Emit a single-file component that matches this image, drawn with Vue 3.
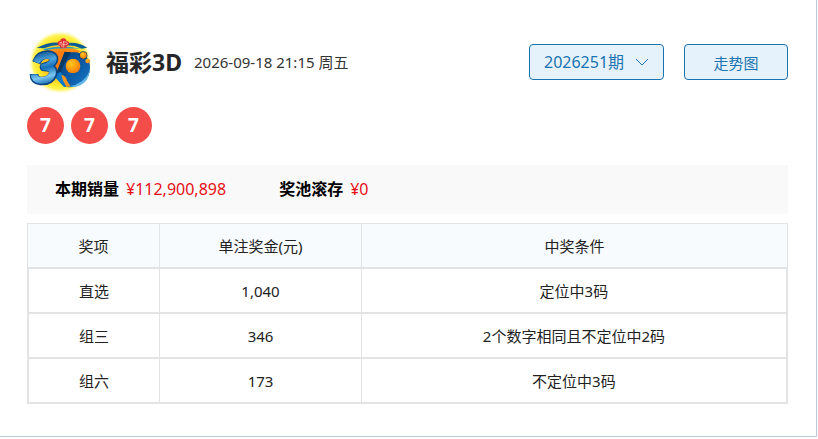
<template>
  <main class="draw-panel">
    <header class="draw-header">
      <svg class="logo" viewBox="21 18 198 186" role="img" aria-label="福彩3D">
        <defs>
          <radialGradient id="sun" cx="50%" cy="50%" r="50%">
            <stop offset="0" stop-color="#ff9a1a" />
            <stop offset="0.45" stop-color="#ffb81e" />
            <stop offset="0.72" stop-color="#ffe92c" />
            <stop offset="0.86" stop-color="#fff455" />
            <stop offset="1" stop-color="#fffbd0" stop-opacity="0" />
          </radialGradient>
          <linearGradient id="three" gradientUnits="userSpaceOnUse" x1="60" y1="78" x2="85" y2="180">
            <stop offset="0" stop-color="#0a4f92" />
            <stop offset="0.3" stop-color="#4fa6dd" />
            <stop offset="0.5" stop-color="#1270ba" />
            <stop offset="0.75" stop-color="#7cc6ee" />
            <stop offset="1" stop-color="#0c62ae" />
          </linearGradient>
          <linearGradient id="dee" x1="0" y1="0" x2="1" y2="1">
            <stop offset="0" stop-color="#043f7c" />
            <stop offset="0.55" stop-color="#0a5ba6" />
            <stop offset="1" stop-color="#1b7ac5" />
          </linearGradient>
          <radialGradient id="orb" cx="38%" cy="34%" r="70%">
            <stop offset="0" stop-color="#ffc81c" />
            <stop offset="0.5" stop-color="#ffa012" />
            <stop offset="1" stop-color="#f4780a" />
          </radialGradient>
        </defs>
        <circle cx="121" cy="112" r="95" fill="url(#sun)" />
        <path d="M76 78 Q130 58 182 78 L166 90 L90 90 Z" fill="#ff8a14" />
        <path d="M50 69 Q86 50 118 53 L120 60 Q96 60 72 70 Z" fill="#0a5d99" />
        <path d="M142 54 Q174 50 202 68 L186 71 Q164 61 140 61 Z" fill="#0a5d99" />
        <path d="M70 72 Q128 56 188 73 Q128 66 74 76 Z" fill="#2a9fbd" />
        <path
          d="M116 82 H166 Q211 87 210 130 Q208 172 166 184 Q148 190 134 184 L112 160 Z"
          fill="url(#dee)"
        />
        <path d="M111 81 L136 76 L112 140 L100 130 Z" fill="#ff7c12" />
        <path d="M134 80 L152 82 L128 126 L122 152 L108 146 Z" fill="#043865" />
        <path d="M100 150 L122 140 L146 184 L132 186 L112 164 Z" fill="#0878c8" />
        <path d="M124 150 Q138 152 141 168 L152 184 L140 186 Q128 170 124 150 Z" fill="#ff941a" />
        <path d="M148 184 Q192 176 208 140 Q205 176 166 186 Z" fill="#64b8e8" />
        <g fill="none" stroke-linejoin="round">
          <path
            d="M49 113 Q58 88 84 89 Q108 91 100 109 Q94 122 72 126 Q105 126 99 148 Q91 169 62 168 Q42 166 42 147"
            stroke="#064483"
            stroke-width="26"
          />
          <path
            d="M49 112 Q58 90 84 91 Q106 93 98 109 Q92 122 72 126 Q102 127 97 147 Q89 167 62 166 Q43 164 42 148"
            stroke="url(#three)"
            stroke-width="20"
          />
        </g>
        <circle cx="159" cy="123" r="22" fill="url(#orb)" />
        <circle cx="190" cy="91" r="12" fill="#083e6e" />
        <circle cx="190" cy="91" r="10" fill="url(#orb)" />
        <circle cx="203" cy="108" r="7" fill="url(#orb)" />
        <g fill="#df3035">
          <circle cx="130" cy="49" r="9" />
          <circle cx="121" cy="55" r="8" />
          <circle cx="139" cy="55" r="8" />
          <circle cx="126" cy="64" r="6" />
          <circle cx="135" cy="63" r="6" />
        </g>
        <g fill="none" stroke="#ffe0d5" stroke-width="2" stroke-linecap="round">
          <path d="M120 59 Q118 51 124 51 Q127 52 126 65" />
          <path d="M131 50 V66 M131 51 Q143 48 142 57 Q139 61 133 59" />
        </g>
      </svg>
      <h1>福彩3D</h1>
      <time datetime="2026-09-18T21:15">2026-09-18 21:15 周五</time>

      <div class="actions">
        <div class="issue-picker">
          <select v-model="issue" aria-label="期号">
            <option v-for="item in issues" :key="item" :value="item">{{ item }}期</option>
          </select>
          <svg class="chevron" viewBox="0 0 14 8" aria-hidden="true">
            <path d="M1 1 L7 7 L13 1" />
          </svg>
        </div>
        <button type="button" class="trend">走势图</button>
      </div>
    </header>

    <ul class="balls">
      <li v-for="(n, i) in numbers" :key="i">{{ n }}</li>
    </ul>

    <dl class="summary">
      <div v-for="item in summary" :key="item.label">
        <dt>{{ item.label }}</dt>
        <dd>{{ item.value }}</dd>
      </div>
    </dl>

    <table>
      <thead>
        <tr>
          <th class="col-prize" scope="col">奖项</th>
          <th class="col-amount" scope="col">单注奖金(元)</th>
          <th scope="col">中奖条件</th>
        </tr>
      </thead>
      <tbody>
        <tr v-for="prize in prizes" :key="prize.name">
          <td>{{ prize.name }}</td>
          <td>{{ prize.amount.toLocaleString('en-US') }}</td>
          <td>{{ prize.condition }}</td>
        </tr>
      </tbody>
    </table>
  </main>
</template>

<script setup>
import { ref } from 'vue';

const issues = ['2026251'];
const issue = ref(issues[0]);

const numbers = [7, 7, 7];

const summary = [
  { label: '本期销量', value: '¥112,900,898' },
  { label: '奖池滚存', value: '¥0' },
];

const prizes = [
  { name: '直选', amount: 1040, condition: '定位中3码' },
  { name: '组三', amount: 346, condition: '2个数字相同且不定位中2码' },
  { name: '组六', amount: 173, condition: '不定位中3码' },
];
</script>

<style>
body {
  background: #fff;
}
</style>

<style scoped>
.draw-panel {
  box-sizing: border-box;
  margin-right: 1px;
  padding: 31px 28px 32px 27px;
  border-right: 1px solid #b9cbdc;
  border-bottom: 1px solid #b9cbdc;
  font-family: "Noto Sans", "Noto Sans CJK SC", sans-serif;
  font-size: 15px;
  line-height: 22px;
  color: #222;
}

.draw-header {
  display: flex;
  align-items: center;
}

.logo {
  flex: none;
  width: 66px;
  height: 62px;
}

h1 {
  margin: 0 12px 0 13px;
  font-size: 23px;
  line-height: 32px;
  font-weight: 700;
  color: #262629;
  white-space: nowrap;
}

time {
  color: #333;
  white-space: nowrap;
}

.actions {
  display: flex;
  gap: 20px;
  margin-left: auto;
}

.issue-picker {
  position: relative;
}

.issue-picker select,
.trend {
  box-sizing: border-box;
  height: 36px;
  margin: 0;
  border: 1px solid #1a74b0;
  border-radius: 4px;
  background: #e6f2fb;
  color: #1a74b0;
  font-family: inherit;
  cursor: pointer;
}

.issue-picker select {
  appearance: none;
  width: 135px;
  padding: 0 36px 0 14px;
  font-size: 16px;
}

.trend {
  width: 104px;
  padding: 0;
  font-size: 15px;
}

.chevron {
  position: absolute;
  top: 14px;
  right: 15px;
  width: 14px;
  height: 8px;
  fill: none;
  stroke: #1a74b0;
  pointer-events: none;
}

.balls {
  display: flex;
  gap: 7px;
  margin: 14px 0 21px;
  padding: 0;
  list-style: none;
}

.balls li {
  width: 37px;
  height: 37px;
  border-radius: 50%;
  background: #f44d49;
  color: #fff;
  font-size: 19px;
  font-weight: 700;
  line-height: 37px;
  text-align: center;
}

.summary {
  display: flex;
  gap: 53px;
  margin: 0 0 9px;
  padding: 0 28px;
  background: #f9f9f9;
  font-size: 16px;
  line-height: 49px;
}

.summary div {
  display: flex;
  gap: 7px;
}

.summary dt {
  font-weight: 700;
  color: #000;
}

.summary dd {
  margin: 0;
  color: #e60f14;
}

table {
  width: 100%;
  table-layout: fixed;
  border-collapse: separate;
  border-spacing: 0;
}

.col-prize {
  width: 17.5%;
}

.col-amount {
  width: 26.5%;
}

th,
td {
  box-sizing: border-box;
  padding: 0;
  height: 45px;
  border: solid #e2e3e4;
  border-width: 0 1px 2px 0;
  font-weight: 400;
  text-align: center;
}

th {
  height: 46px;
  border-top-width: 1px;
  background: #f7fbfe;
}

th:first-child {
  border-left-width: 1px;
}

td:first-child {
  border-left-width: 2px;
}

td:last-child {
  border-right-width: 2px;
}
</style>
